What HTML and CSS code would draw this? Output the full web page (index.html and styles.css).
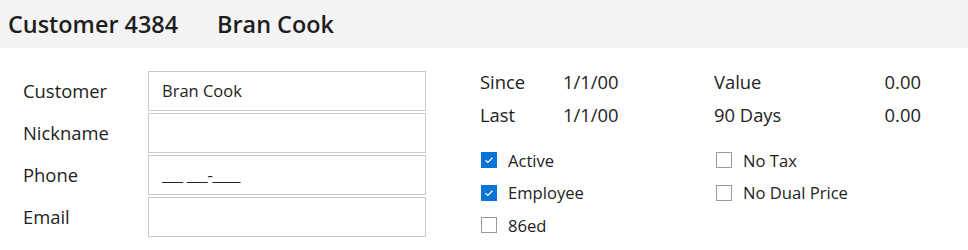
FILE: index.html
```html
<!DOCTYPE html>
<html>
<head>
<meta charset="utf-8">
<link rel="stylesheet" href="styles.css">
</head>
<body>
<header class="top">
  <span class="title">Customer 4384</span>
  <span class="title">Bran Cook</span>
</header>
<main class="content">
  <section class="fields">
    <label class="lbl">Customer</label><div class="box">Bran Cook</div>
    <label class="lbl">Nickname</label><div class="box"></div>
    <label class="lbl">Phone</label><div class="box phone">___ ___-____</div>
    <label class="lbl">Email</label><div class="box"></div>
  </section>
  <section class="side">
    <div class="stats">
      <span>Since</span><span>1/1/00</span><span>Value</span><span class="num">0.00</span>
      <span>Last</span><span>1/1/00</span><span>90 Days</span><span class="num">0.00</span>
    </div>
    <div class="checks">
      <div class="col">
        <div class="chk"><span class="cb on"><svg viewBox="0 0 16 16"><path d="M4 8.3l2.6 2.5L12 5.4" fill="none" stroke="#fff" stroke-width="1.4"/></svg></span>Active</div>
        <div class="chk"><span class="cb on"><svg viewBox="0 0 16 16"><path d="M4 8.3l2.6 2.5L12 5.4" fill="none" stroke="#fff" stroke-width="1.4"/></svg></span>Employee</div>
        <div class="chk"><span class="cb"></span>86ed</div>
      </div>
      <div class="col">
        <div class="chk"><span class="cb"></span>No Tax</div>
        <div class="chk"><span class="cb"></span>No Dual Price</div>
      </div>
    </div>
  </section>
</main>
</body>
</html>
```
FILE: styles.css
```css
* { box-sizing: border-box; }
body {
  margin: 0;
  font-family: "Open Sans", "Noto Sans", sans-serif;
  color: #222;
  background: #fff;
}
.top {
  height: 48px;
  background: #f3f3f3;
  display: flex;
  align-items: center;
  gap: 39px;
  padding-left: 8px;
}
.title {
  font-size: 23.4px;
  font-weight: 600;
  color: #1e1e1e;
}
.content {
  display: flex;
  padding-top: 23px;
}
.fields {
  margin-left: 23px;
  width: 403px;
  display: grid;
  grid-template-columns: 125px 278px;
  grid-auto-rows: 40px;
  row-gap: 2px;
  align-items: center;
  align-content: start;
}
.lbl {
  font-size: 18.4px;
  line-height: 24px;
  color: #222;
}
.box {
  height: 40px;
  border: 1px solid #c9c9c9;
  padding-left: 13px;
  font-size: 16.5px;
  line-height: 38px;
  color: #222;
}
.phone { letter-spacing: -0.3px; }
.side {
  margin-left: 54px;
  margin-top: -6px;
}
.stats {
  display: grid;
  grid-template-columns: 83px 151px 120px 87px;
  grid-auto-rows: 33px;
  align-items: center;
  font-size: 18.4px;
}
.num { text-align: right; }
.checks {
  display: flex;
  margin-top: 13px;
}
.col { width: 235px; }
.chk {
  height: 32.5px;
  display: flex;
  align-items: center;
  font-size: 16.6px;
}
.cb {
  width: 16px;
  height: 16px;
  border: 1px solid #9a9a9a;
  margin-left: 1px;
  margin-right: 11px;
  display: inline-block;
}
.cb.on {
  background: #0a74d4;
  border-color: #0a74d4;
}
.cb svg { display: block; width: 14px; height: 14px; }
```
